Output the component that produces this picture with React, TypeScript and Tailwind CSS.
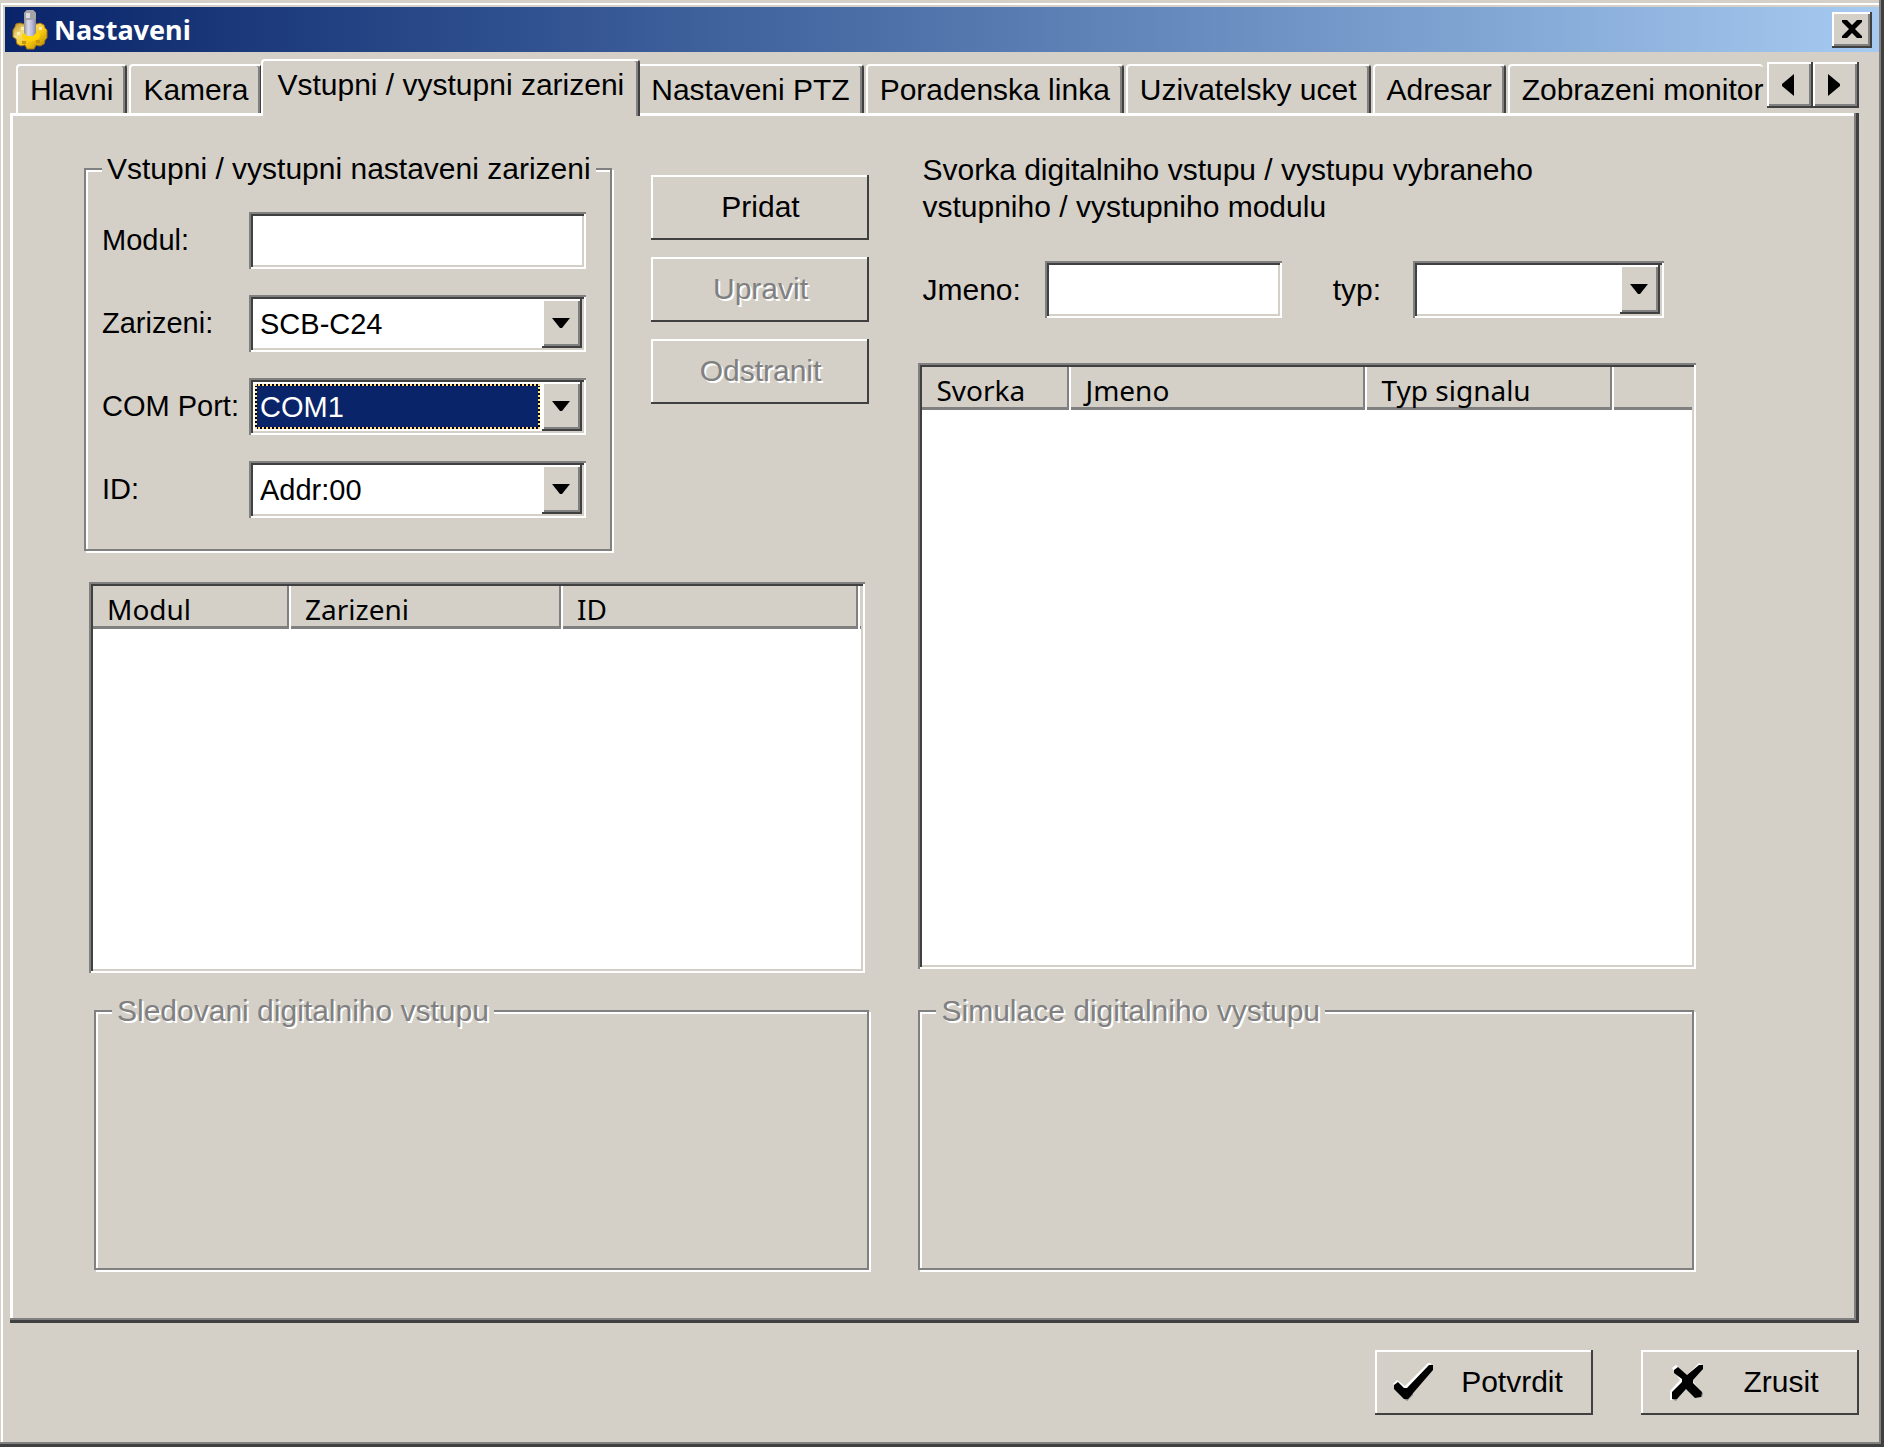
import { useState } from "react";
import type { ReactNode } from "react";

/* bevels */
const SUNKEN =
  "shadow-[inset_2px_2px_#808080,inset_-2px_-2px_#fff,inset_4px_4px_#404040,inset_-4px_-4px_#d4d0c8]";
const RAISED =
  "shadow-[inset_-2px_-2px_#404040,inset_2px_2px_#fff,inset_-4px_-4px_#808080]";
const FLAT_BUTTON = "shadow-[inset_-2px_-2px_#404040,inset_2px_2px_#fff]";

const tabs = [
  "Hlavni",
  "Kamera",
  "Vstupni / vystupni zarizeni",
  "Nastaveni PTZ",
  "Poradenska linka",
  "Uzivatelsky ucet",
  "Adresar",
  "Zobrazeni monitor",
];

function GearIcon() {
  return (
    <svg viewBox="0 0 36 40" className="h-10 w-9" aria-hidden="true">
      <defs>
        <linearGradient id="gold" x1="0" y1="0" x2="1" y2="1">
          <stop offset="0" stopColor="#c08a18" />
          <stop offset="0.3" stopColor="#f3dc80" />
          <stop offset="0.6" stopColor="#f8c80c" />
          <stop offset="1" stopColor="#b07c0c" />
        </linearGradient>
        <linearGradient id="steel" x1="0" y1="0" x2="1" y2="0">
          <stop offset="0" stopColor="#8e8e96" />
          <stop offset="0.35" stopColor="#dcdce4" />
          <stop offset="0.7" stopColor="#b4b4dc" />
          <stop offset="1" stopColor="#84848e" />
        </linearGradient>
      </defs>
      <path
        d="M4 14l4-1 3 1h14l3-1 4 2 1 3 2 2v8l-2 2-1 4-4 2-4-1-2 4h-7l-2-4-4 1-4-2-1-5-3-2v-7l2-3z"
        fill="url(#gold)"
        stroke="#a87a14"
      />
      <ellipse cx="19" cy="26" rx="9" ry="5" fill="#ffd400" />
      <path d="M5 22h3v3H5zM9 17h3v3H9zM27 17h3v3h-3z" fill="#fbefb0" />
      <path d="M10 31h4v3h-4zM24 30h4v3h-4z" fill="#c8940c" />
      <path d="M12 3l3-3h6l3 3v20l-3 3h-6l-3-3z" fill="url(#steel)" />
      <path d="M12 3l3-3h6l3 3v5l-2 2h-8l-2-2z" fill="#a4a4a8" />
      <path d="M14 3h4v5h-4z" fill="#dedee2" />
    </svg>
  );
}

function CheckIcon() {
  return (
    <svg viewBox="0 0 40 38" className="h-[38px] w-10" aria-hidden="true">
      <path d="M0 21l4-4 8 6L35 0h3v4L13 33z" fill="#fff" />
      <path d="M10 35l4 3 6-6v-4z" fill="#808080" />
      <path d="M1 22l4-3 6 6h3L36 2h4v5L15 36h-4L1 26z" fill="#000" />
    </svg>
  );
}

function CrossIcon() {
  return (
    <svg viewBox="0 0 34 38" className="h-[38px] w-[34px]" aria-hidden="true">
      <path d="M2 5l4-3 11 10L29 0l3 2-10 15 9 12-4 5-11-9-10 12H0v-9l10-11z" fill="#fff" />
      <path d="M2 36l4 2 3-5zM30 28l3 2-1 4h-3z" fill="#808080" />
      <path d="M4 7l4-3 9 8L29 2h4v4L23 17v3l9 9-1 5-6 1-9-9-9 10H2v-7l10-10v-3L4 10z" fill="#000" />
    </svg>
  );
}

function DropDown({
  id,
  value,
  focused = false,
}: {
  id: string;
  value: string;
  focused?: boolean;
}) {
  return (
    <div className={`flex h-[57px] w-full bg-white p-1 ${SUNKEN}`}>
      <span className={`m-[2px] flex min-w-0 flex-1 ${focused ? "bg-black" : ""}`}>
        <select
          id={id}
          defaultValue={value}
          className={`w-full min-w-0 appearance-none border-2 border-dotted bg-clip-padding pl-[3px] outline-none ${
            focused
              ? "border-[#ffe08a] bg-[#0a246a] text-white"
              : "border-transparent bg-white text-black"
          }`}
        >
          <option>{value}</option>
        </select>
      </span>
      <span
        className={`flex w-10 shrink-0 items-center justify-center bg-[#d4d0c8] pr-[2px] pb-[2px] ${RAISED}`}
      >
        <svg viewBox="0 0 18 10" className="h-[10px] w-[18px]" aria-hidden="true">
          <path d="M0 0h18L10 10H8z" />
        </svg>
      </span>
    </div>
  );
}

function GroupBox({
  title,
  disabled = false,
  className = "",
  children,
}: {
  title: string;
  disabled?: boolean;
  className?: string;
  children?: ReactNode;
}) {
  return (
    <fieldset
      disabled={disabled}
      className={`min-w-0 border-2 border-[#808080] shadow-[2px_2px_#fff,inset_2px_2px_#fff] ${className}`}
    >
      <legend
        className={`ml-4 bg-[#d4d0c8] px-[5px] leading-9 whitespace-nowrap ${
          disabled ? "text-[#808080] [text-shadow:2px_2px_#fff]" : ""
        }`}
      >
        {title}
      </legend>
      {children}
    </fieldset>
  );
}

function ListView({
  columns,
  className = "",
}: {
  columns: { label: string; width: string }[];
  className?: string;
}) {
  return (
    <div className={`bg-white p-1 ${SUNKEN} ${className}`}>
      <table className="w-full table-fixed border-collapse font-['Noto_Sans',sans-serif] text-[28px]">
        <thead>
          <tr className="h-[43px] bg-[#d4d0c8]">
            {columns.map((col, i) => (
              <th
                key={col.label || "rest"}
                scope="col"
                className={`${col.width} overflow-hidden p-0 pt-[3px] text-left leading-10 font-normal ${
                  i < columns.length - 1
                    ? "shadow-[inset_-2px_0_#fff,inset_-4px_0_#808080,inset_0_-3px_#808080]"
                    : "shadow-[inset_0_-3px_#808080]"
                }`}
              >
                <span className="pl-[14px]">{col.label}</span>
              </th>
            ))}
          </tr>
        </thead>
        <tbody />
      </table>
    </div>
  );
}

function PushButton({
  disabled = false,
  icon,
  children,
}: {
  disabled?: boolean;
  icon?: ReactNode;
  children: ReactNode;
}) {
  return (
    <button
      type="button"
      disabled={disabled}
      className={`flex h-[65px] w-[218px] shrink-0 items-center justify-center pb-[2px] ${FLAT_BUTTON} ${
        disabled ? "text-[#808080] [text-shadow:2px_2px_#fff]" : ""
      } ${icon ? "pr-3" : ""}`}
    >
      {icon}
      {children}
    </button>
  );
}

export default function App() {
  const [active, setActive] = useState(2);

  return (
    <div className="flex min-h-screen w-full flex-col bg-[#d4d0c8] px-[5px] pt-[7px] pb-8 font-['Liberation_Sans',Arial,sans-serif] text-[30px] leading-9 text-black shadow-[inset_-3px_-3px_#404040,inset_-5px_-5px_#808080,inset_1px_3px_#d4d0c8,inset_3px_5px_#fff]">
      {/* title bar */}
      <header className="flex h-[45px] items-center bg-linear-to-r from-[#0a246a] to-[#a6caf0] pr-[7px] pl-[7px]">
        <GearIcon />
        <h1 className="ml-1.5 flex-1 font-['Noto_Sans',sans-serif] text-[27px] font-bold text-white">
          Nastaveni
        </h1>
        <button
          type="button"
          aria-label="Zavrit"
          className={`flex h-9 w-10 items-center justify-center bg-[#d4d0c8] pb-[2px] ${RAISED}`}
        >
          <svg viewBox="0 0 20 18" className="h-[18px] w-5" aria-hidden="true">
            <path d="M0 0h5l5 5 5-5h5v2l-7 7 7 7v2h-5l-5-5-5 5H0v-2l7-7-7-7z" />
          </svg>
        </button>
      </header>

      {/* tabs */}
      <div className="relative z-10 mt-[7px] mr-5 ml-[11px] flex">
        <div role="tablist" className="flex h-[57px] min-w-0 flex-1 items-start overflow-hidden">
          {tabs.map((tab, i) => (
            <button
              key={tab}
              type="button"
              role="tab"
              aria-selected={i === active}
              onClick={() => setActive(i)}
              className={`shrink-0 rounded-t-[4px] border-t-2 border-r-2 border-l-2 border-t-white border-r-[#404040] border-l-white bg-[#d4d0c8] pl-3 text-left whitespace-nowrap last:border-r-0 last:pr-0 last:shadow-none ${
                i === active
                  ? "relative z-10 -mr-[3px] -ml-[3px] h-[57px] pr-[14px] pb-2 pl-[14px] shadow-[inset_-2px_0_#808080]"
                  : "mt-[5px] mr-[2px] h-[49px] pr-3 shadow-[inset_-2px_0_#808080] last:mr-0"
              }`}
            >
              {tab}
            </button>
          ))}
        </div>
        <div className="mt-[3px] flex shrink-0">
          <button
            type="button"
            aria-label="Predchozi"
            className={`flex h-[46px] w-[46px] items-center justify-center bg-[#d4d0c8] pr-1 ${RAISED}`}
          >
            <svg viewBox="0 0 12 22" className="h-[22px] w-3" aria-hidden="true">
              <path d="M12 0v22L0 12v-2z" />
            </svg>
          </button>
          <button
            type="button"
            aria-label="Dalsi"
            className={`flex h-[46px] w-[46px] items-center justify-center bg-[#d4d0c8] pr-1 ${RAISED}`}
          >
            <svg viewBox="0 0 12 22" className="h-[22px] w-3" aria-hidden="true">
              <path d="M0 0v22l12-10v-2z" />
            </svg>
          </button>
        </div>
      </div>

      {/* page */}
      <main className="-mt-[3px] mr-5 ml-[5px] grid grid-cols-[786fr_778fr] gap-x-[49px] pt-[38px] pr-[163px] pb-[53px] pl-[74px] shadow-[inset_-3px_-3px_#404040,inset_-5px_-5px_#808080,inset_3px_3px_#fff]">
        <section className="flex flex-col">
          <div className="flex gap-[39px]">
            <GroupBox title="Vstupni / vystupni nastaveni zarizeni" className="flex-1">
              <div className="grid grid-cols-[147px_1fr] items-center gap-y-[26px] pt-[25px] pr-[24px] pb-[31px] pl-4 text-[29px]">
                <label htmlFor="modul" className="pb-[2px]">
                  Modul:
                </label>
                <input
                  id="modul"
                  type="text"
                  className={`h-[57px] w-full min-w-0 bg-white px-2 outline-none ${SUNKEN}`}
                />
                <label htmlFor="zarizeni" className="pb-[2px]">
                  Zarizeni:
                </label>
                <DropDown id="zarizeni" value="SCB-C24" />
                <label htmlFor="port" className="pb-[2px]">
                  COM Port:
                </label>
                <DropDown id="port" value="COM1" focused />
                <label htmlFor="addr" className="pb-[2px]">
                  ID:
                </label>
                <DropDown id="addr" value="Addr:00" />
              </div>
            </GroupBox>
            <div className="flex flex-col gap-[17px] pt-6">
              <PushButton>Pridat</PushButton>
              <PushButton disabled>Upravit</PushButton>
              <PushButton disabled>Odstranit</PushButton>
            </div>
          </div>

          <ListView
            className="mt-[31px] mr-1 ml-[5px] h-[391px]"
            columns={[
              { label: "Modul", width: "w-[198px]" },
              { label: "Zarizeni", width: "w-[272px]" },
              { label: "ID", width: "w-[297px]" },
              { label: "", width: "w-auto" },
            ]}
          />

          <GroupBox
            title="Sledovani digitalniho vstupu"
            disabled
            className="mt-5 ml-[10px] h-[277px]"
          />
        </section>

        <section className="flex flex-col">
          <p className="pl-1 leading-[37px]">
            Svorka digitalniho vstupu / vystupu vybraneho
            <br />
            vstupniho / vystupniho modulu
          </p>

          <div className="mt-9 flex items-center pr-8 pl-1">
            <label htmlFor="jmeno" className="w-[123px] shrink-0">
              Jmeno:
            </label>
            <div className="flex w-0 flex-[237]">
              <input
                id="jmeno"
                type="text"
                className={`h-[57px] w-full min-w-0 bg-white px-2 outline-none ${SUNKEN}`}
              />
            </div>
            <label htmlFor="typ" className="ml-[51px] w-20 shrink-0">
              typ:
            </label>
            <div className="w-0 flex-[252]">
              <DropDown id="typ" value="" />
            </div>
          </div>

          <ListView
            className="mt-[45px] h-[606px]"
            columns={[
              { label: "Svorka", width: "w-[149px]" },
              { label: "Jmeno", width: "w-[296px]" },
              { label: "Typ signalu", width: "w-[247px]" },
              { label: "", width: "w-auto" },
            ]}
          />

          <GroupBox
            title="Simulace digitalniho vystupu"
            disabled
            className="mt-6 mr-[2px] h-[277px]"
          />
        </section>
      </main>

      {/* footer */}
      <footer className="mt-[27px] mr-5 flex justify-end gap-12">
        <PushButton
          icon={
            <span className="mr-7">
              <CheckIcon />
            </span>
          }
        >
          Potvrdit
        </PushButton>
        <PushButton
          icon={
            <span className="mr-10">
              <CrossIcon />
            </span>
          }
        >
          Zrusit
        </PushButton>
      </footer>
    </div>
  );
}
